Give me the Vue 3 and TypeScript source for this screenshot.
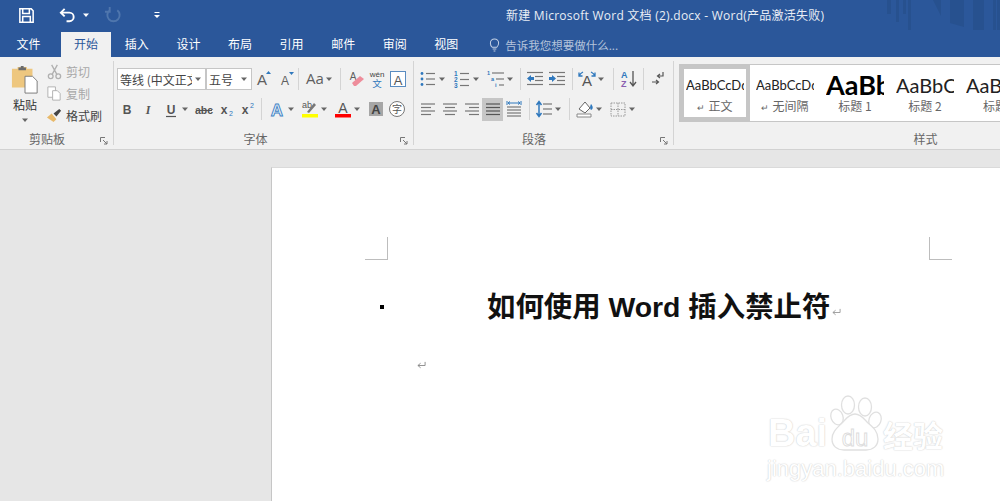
<template>
  <div class="app">
    <header class="titlebar">
      <div class="qat">
        <svg class="qat-icon save" viewBox="0 0 20 20"><path d="M3 3h12l2 2v12H3z M6 3v5h7V3 M6 17v-6h8v6" fill="none" stroke="#fff" stroke-width="1.6" /></svg>
        <svg class="qat-icon undo" viewBox="0 0 20 20"><path d="M7 3L3 7l4 4 M3 7h9a4.500 4.500 0 0 1 0 9H9" fill="none" stroke="#fff" stroke-width="2" /></svg>
        <svg class="qat-caret undo-caret" viewBox="0 0 8 8"><path d="M1 2.500h6L4 6z" fill="#fff" /></svg>
        <svg class="qat-icon redo" viewBox="0 0 20 20"><path d="M6 4.500a6.500 6.500 0 1 0 8 0 M6 1v5H1" fill="none" stroke="#4f76ad" stroke-width="2" /></svg>
        <svg class="qat-caret custom" viewBox="0 0 8 8"><path d="M1.500 1h5v1h-5z M1 4h6L4 7z" fill="#fff" /></svg>
      </div>
      <div class="doc-title">新建 Microsoft Word 文档 (2).docx - Word(产品激活失败)</div>
      <svg class="title-art" viewBox="0 0 115 36">
        <path d="M2 0h4v14H2z M11 0h3v22h-3z M18 0h3v14h-3z M23 0h3v32h-3z M48 0l8 16V0z M65 0h14v27l-14-4z M88 0h11v36H88z M108 0h3v34h-3z M112 0h3v35h-3z" fill="#27518f" />
      </svg>
    </header>

    <nav class="tabs">
      <span v-for="tab in tabs" :key="tab.name" class="tab" :class="{ active: tab.name === '开始', file: tab.name === '文件' }">{{ tab.name }}</span>
      <span class="tell-me">
        <svg class="bulb" viewBox="0 0 12 16"><path d="M3.500 11C2 9.500 1.500 8.500 1.500 6.500a4.500 4.500 0 0 1 9 0c0 2-.5 3-2 4.500z M4 13h4 M5 15h2" fill="none" stroke="#c5d2e6" stroke-width="1.100" /></svg>
        告诉我您想要做什么...
      </span>
    </nav>

    <section class="ribbon">
      <div class="group clipboard">
        <div class="clip-body">
          <div class="paste">
            <svg class="paste-icon" viewBox="0 0 30 30">
              <path d="M1 3h6V1h10v2h6v20H1z" fill="#eec77f" />
              <path d="M8 1.500h8v3H8z M10.500 0h3v2h-3z" fill="#6b6b6b" />
              <path d="M15 11h8l5 5v13H15z" fill="#fff" stroke="#777" />
            </svg>
            <span class="paste-label">粘贴</span>
            <svg class="small-caret" viewBox="0 0 8 8"><path d="M1 2.500h6L4 6z" fill="#666" /></svg>
          </div>
          <ul class="clip-list">
            <li v-for="item in clipItems" :key="item.text" :class="{ enabled: item.enabled }">
              <svg class="clip-icon" viewBox="0 0 18 18" v-html="item.icon"></svg>
              <span>{{ item.text }}</span>
            </li>
          </ul>
        </div>
        <div class="group-label">剪贴板</div>
        <svg class="launcher" viewBox="0 0 8 8"><path d="M.5 5V.5H5 M3 3l4 4 M7 4v3H4" fill="none" stroke="#777" /></svg>
      </div>

      <div v-for="group in toolGroups" :key="group.label" class="group" :class="group.cls">
        <div v-for="(row, r) in group.rows" :key="r" class="tool-row">
          <template v-for="(item, i) in row" :key="i">
            <span v-if="item.sep" class="sep" :style="{ width: item.sep + 'px' }"></span>
            <span v-else-if="item.select" class="select" :style="{ width: item.w + 'px' }">
              <span class="select-text">{{ item.select }}</span>
              <svg class="small-caret" viewBox="0 0 8 8"><path d="M1 2.500h6L4 6z" fill="#666" /></svg>
            </span>
            <span v-else class="tool" :class="{ active: item.active }" :style="{ width: item.w + 'px' }">
              <svg class="tool-icon" viewBox="0 0 20 20" v-html="icons[item.icon!]"></svg>
            </span>
            <svg v-if="item.caret" class="tool-caret" viewBox="0 0 9 8"><path d="M1 2.500h6L4 6z" fill="#666" /></svg>
          </template>
        </div>
        <div class="group-label">{{ group.label }}</div>
        <svg class="launcher" viewBox="0 0 8 8"><path d="M.5 5V.5H5 M3 3l4 4 M7 4v3H4" fill="none" stroke="#777" /></svg>
      </div>

      <div class="group styles">
        <div class="gallery">
          <div v-for="style in styleItems" :key="style.label" class="style-item" :class="{ current: style.label === '正文' }">
            <div class="style-preview" :class="style.cls">{{ style.preview }}</div>
            <div class="style-label"><i v-if="style.mark">↵</i>{{ style.label }}</div>
          </div>
        </div>
        <div class="group-label">样式</div>
      </div>
    </section>

    <main class="workspace">
      <div class="page">
        <div class="crop-row">
          <span class="crop crop-left"></span>
          <span class="crop crop-right"></span>
        </div>
        <div class="heading-row">
          <span class="bullet"></span>
          <h1>如何使用 Word 插入禁止符<svg class="return big" viewBox="0 0 12 10"><path d="M10 1v4H2 M5 2.500L2 5l3 2.500" fill="none" stroke="#999" /></svg></h1>
        </div>
        <div class="empty-para">
          <svg class="return" viewBox="0 0 12 10"><path d="M10 1v4H2 M5 2.500L2 5l3 2.500" fill="none" stroke="#888" /></svg>
        </div>
      </div>
      <div class="watermark">
        <span class="wm-bai">Bai</span>
        <svg class="wm-paw" viewBox="0 0 56 66">
          <g fill="#fff" stroke="#e0e0e0" stroke-width="1.300">
            <ellipse cx="21" cy="18" rx="6.500" ry="9" />
            <ellipse cx="38" cy="20" rx="6.500" ry="9" />
            <ellipse cx="10" cy="30" rx="6" ry="8" transform="rotate(-20 10 30)" />
            <ellipse cx="48" cy="33" rx="6" ry="8" transform="rotate(20 48 33)" />
            <path d="M28 27c6 0 9 5 13 9 6 5 10 9 10 16 0 7-5 11-12 11H17c-7 0-12-4-12-11 0-7 5-11 10-16 4-4 7-9 13-9z" />
          </g>
          <text x="28" y="59" text-anchor="middle" font-size="24" fill="#fff" stroke="#dcdcdc" stroke-width=".9" font-family="Liberation Sans">du</text>
        </svg>
        <span class="wm-cn">经验</span>
        <span class="wm-url">jingyan.baidu.com</span>
      </div>
    </main>
  </div>
</template>

<script setup lang="ts">
type Item = { w?: number; icon?: string; caret?: boolean; sep?: number; select?: string; active?: boolean };

const tabs = ["文件", "开始", "插入", "设计", "布局", "引用", "邮件", "审阅", "视图"].map((name) => ({ name }));

const grey = "#5f5f5f";
const blue = "#2f78bd";

function letter(t: string, size = 14, fill = grey, weight = "400", family = "Liberation Sans") {
  return `<text x="10" y="15" text-anchor="middle" font-size="${size}" font-weight="${weight}" fill="${fill}" font-family="${family}">${t}</text>`;
}
function lines(rows: [number, number, number][], color = "#777") {
  return rows.map(([x1, x2, y]) => `<path d="M${x1} ${y}H${x2}" stroke="${color}" stroke-width="1.200" />`).join("");
}

const icons: Record<string, string> = {
  grow: `<text x="8" y="16" text-anchor="middle" font-size="15" fill="${grey}" font-family="Liberation Sans">A</text><path d="M12 5l2.500-3 2.500 3z" fill="${blue}"/>`,
  shrink: `<text x="9" y="16" text-anchor="middle" font-size="12" fill="${grey}" font-family="Liberation Sans">A</text><path d="M13 3h5l-2.500 3z" fill="${blue}"/>`,
  case: letter("Aa", 15, grey, "400", "Open Sans"),
  eraser: `<text x="6" y="11" text-anchor="middle" font-size="10" fill="${grey}" font-family="Liberation Sans">A</text><path d="M5 14l8-7 4 3-8 7H7z" fill="#ee8d9b"/>`,
  wen: `<text x="10" y="8" text-anchor="middle" font-size="8" fill="#444" font-family="Liberation Sans">wén</text><text x="10" y="18" text-anchor="middle" font-size="9.500" fill="${blue}" font-family="Noto Sans CJK SC">文</text>`,
  box: `<rect x="2.500" y="2.500" width="15" height="15" fill="#fff" stroke="#5a8cc0"/><text x="10" y="15.500" text-anchor="middle" font-size="13" fill="#555" font-family="Liberation Sans">A</text>`,
  bold: letter("B", 12, "#555", "700"),
  italic: letter("I", 12, "#555", "700", "Liberation Serif").replace('font-weight="700"', 'font-weight="700" font-style="italic"'),
  under: letter("U", 12, "#555", "700") + `<path d="M5 17.500h10" stroke="#555" stroke-width="1.200"/>`,
  strike: letter("abc", 10.5, "#555", "700") + `<path d="M2 11.500h16" stroke="#555"/>`,
  sub: `<text x="8" y="15" text-anchor="middle" font-size="12" font-weight="700" fill="#555" font-family="Liberation Sans">x</text><text x="15" y="17" text-anchor="middle" font-size="7" fill="${blue}" font-family="Liberation Sans">2</text>`,
  sup: `<text x="8" y="15" text-anchor="middle" font-size="12" font-weight="700" fill="#555" font-family="Liberation Sans">x</text><text x="15" y="9" text-anchor="middle" font-size="7" fill="${blue}" font-family="Liberation Sans">2</text>`,
  effect: `<text x="10" y="16.500" text-anchor="middle" font-size="17" font-weight="700" fill="#eaf2fa" stroke="#3e82c4" stroke-width=".9" font-family="Liberation Sans">A</text>`,
  high: `<text x="7" y="9" text-anchor="middle" font-size="9" fill="#555" font-family="Liberation Sans">ab</text><path d="M7 13l7-9 2 2-7 8z" fill="#777"/><path d="M2 15h16v3.500H2z" fill="#ffff00"/>`,
  color: `<text x="10" y="14" text-anchor="middle" font-size="14" fill="#555" font-family="Liberation Sans">A</text><path d="M2 15h16v3.500H2z" fill="#f00"/>`,
  shade: `<rect x="3" y="3" width="14" height="14" fill="#a6a6a6"/><text x="10" y="15" text-anchor="middle" font-size="13" font-weight="700" fill="#444" font-family="Liberation Sans">A</text>`,
  circle: `<circle cx="10" cy="10" r="7.500" fill="#fff" stroke="#777"/><text x="10" y="13.500" text-anchor="middle" font-size="10" fill="#555" font-family="Noto Sans CJK SC">字</text>`,
  bullets: `<g fill="${blue}"><circle cx="4" cy="4.500" r="1.400"/><circle cx="4" cy="10" r="1.400"/><circle cx="4" cy="15.500" r="1.400"/></g>` + lines([[8, 17, 4.5], [8, 17, 10], [8, 17, 15.5]]),
  numbers: `<g fill="${blue}" font-size="6.500" font-weight="700" font-family="Liberation Sans"><text x="2" y="6.500">1</text><text x="2" y="12.500">2</text><text x="2" y="18.500">3</text></g>` + lines([[8, 17, 4.5], [8, 17, 10.5], [8, 17, 16.5]]),
  multi: `<g fill="${blue}" font-size="5.500" font-weight="700" font-family="Liberation Sans"><text x="1" y="6">1</text><text x="5" y="12">a</text><text x="9" y="18">i</text></g>` + lines([[6, 18, 4], [10, 18, 10], [13, 18, 16]]),
  outdent: lines([[2, 18, 3.5], [10, 18, 7.5], [10, 18, 11.5], [2, 18, 15.5]]) + `<path d="M2 9.500l4-3.500v2h3v3H6v2z" fill="${blue}"/>`,
  indent: lines([[2, 18, 3.5], [10, 18, 7.5], [10, 18, 11.5], [2, 18, 15.5]]) + `<path d="M9 9.500L5 6v2H2v3h3v2z" fill="${blue}"/>`,
  dir: `<text x="10" y="17" text-anchor="middle" font-size="15" fill="#555" font-family="Liberation Sans">A</text><path d="M2 7c1-2 2-3 4-4 M2 3.500V7h3.500 M18 7c-1-2-2-3-4-4 M18 3.500V7h-3.500" fill="none" stroke="${blue}" stroke-width="1.300"/>`,
  sort: `<text x="2" y="9" font-size="9" font-weight="700" fill="${blue}" font-family="Liberation Sans">A</text><text x="2" y="18" font-size="9" font-weight="700" fill="#8a5fb0" font-family="Liberation Sans">Z</text><path d="M14 2v14 M11 13l3 4 3-4" fill="none" stroke="#555" stroke-width="1.300"/>`,
  marks: `<path d="M14 3v4H9 M11 5L8.500 7l2.500 2 M3 13h6 M7 11l2.500 2L7 15" fill="none" stroke="#555" stroke-width="1.200"/>`,
  left: lines([[3, 17, 5], [3, 13, 8.5], [3, 17, 12], [3, 13, 15.5]]),
  center: lines([[3, 17, 5], [5, 15, 8.5], [3, 17, 12], [5, 15, 15.5]]),
  right: lines([[3, 17, 5], [7, 17, 8.5], [3, 17, 12], [7, 17, 15.5]]),
  justify: lines([[3, 17, 5], [3, 17, 8.5], [3, 17, 12], [3, 17, 15.5]], "#555"),
  dist: lines([[3, 17, 8], [3, 17, 11], [3, 17, 14], [3, 17, 17]]) + `<path d="M3 2v4 M17 2v4 M4 4h12 M6 2.500L4 4l2 1.500 M14 2.500L16 4l-2 1.500" fill="none" stroke="${blue}"/>`,
  spacing: lines([[9, 18, 5], [9, 18, 10], [9, 18, 15]]) + `<path d="M5 3v14 M2.500 6L5 2.500 7.500 6 M2.500 14L5 17.500 7.500 14" fill="none" stroke="${blue}" stroke-width="1.500"/>`,
  fill: `<path d="M4 10l6-7 5 6-5 5z" fill="#fff" stroke="#666"/><path d="M16 5c2 2 2.500 5 0 6-1-1-1.500-3 0-6z" fill="${blue}"/><path d="M2 15h14v3H2z" fill="#fff" stroke="#888"/>`,
  border: `<path d="M3 4h14v13H3z M10 4v13 M3 10.500h14" fill="none" stroke="#999" stroke-dasharray="1.500 1"/>`,
};

const clipItems = [
  { text: "剪切", enabled: false, icon: `<g fill="none" stroke="#b0b0b0" stroke-width="1.400"><circle cx="5" cy="14" r="2.500"/><circle cx="13" cy="14" r="2.500"/><path d="M6.500 12L12 2 M11.500 12L6 2"/></g>` },
  { text: "复制", enabled: false, icon: `<g fill="#fff" stroke="#b0b0b0"><path d="M2 2h8v11H2z"/><path d="M7 6h5l3 3v7H7z"/></g>` },
  { text: "格式刷", enabled: true, icon: `<path d="M1 11l5-4 5 6-3 3z" fill="#e8b96a"/><path d="M8 7l6-5 2 2-5 6z" fill="#444"/>` },
];

const toolGroups: { label: string; cls: string; rows: Item[][] }[] = [
  {
    label: "字体",
    cls: "font",
    rows: [
      [
        { select: "等线 (中文正文)", w: 89 },
        { select: "五号", w: 46 },
        { w: 22, icon: "grow" },
        { w: 22, icon: "shrink" },
        { sep: 4 },
        { w: 25, icon: "case", caret: true },
        { sep: 11 },
        { w: 22, icon: "eraser" },
        { w: 20, icon: "wen" },
        { w: 21, icon: "box" },
      ],
      [
        { w: 20, icon: "bold" },
        { w: 21, icon: "italic" },
        { w: 23, icon: "under", caret: true },
        { w: 24, icon: "strike" },
        { w: 22, icon: "sub" },
        { w: 21, icon: "sup" },
        { sep: 8 },
        { w: 22, icon: "effect", caret: true },
        { w: 24, icon: "high", caret: true },
        { w: 24, icon: "color", caret: true },
        { w: 24, icon: "shade" },
        { w: 21, icon: "circle" },
      ],
    ],
  },
  {
    label: "段落",
    cls: "para",
    rows: [
      [
        { w: 24, icon: "bullets", caret: true },
        { w: 25, icon: "numbers", caret: true },
        { w: 25, icon: "multi", caret: true },
        { sep: 10 },
        { w: 20, icon: "outdent" },
        { w: 22, icon: "indent" },
        { sep: 10 },
        { w: 20, icon: "dir", caret: true },
        { sep: 13 },
        { w: 20, icon: "sort" },
        { sep: 8 },
        { w: 22, icon: "marks" },
      ],
      [
        { w: 24, icon: "left" },
        { w: 22, icon: "center" },
        { w: 22, icon: "right" },
        { w: 21, icon: "justify", active: true },
        { w: 21, icon: "dist" },
        { sep: 10 },
        { w: 20, icon: "spacing", caret: true },
        { sep: 12 },
        { w: 20, icon: "fill", caret: true },
        { w: 24, icon: "border", caret: true },
      ],
    ],
  },
];

const styleItems = [
  { preview: "AaBbCcDd", label: "正文", mark: true, cls: "s-normal" },
  { preview: "AaBbCcDd", label: "无间隔", mark: true, cls: "s-normal" },
  { preview: "AaBbCc", label: "标题 1", mark: false, cls: "s-h1" },
  { preview: "AaBbCc", label: "标题 2", mark: false, cls: "s-h2" },
  { preview: "AaBbCc", label: "标题", mark: false, cls: "s-h2" },
];
</script>

<style>
html,
body {
  margin: 0;
  overflow: hidden;
  background: #e6e6e6;
}
</style>

<style scoped>
.app {
  width: 1000px;
  height: 501px;
  display: flex;
  flex-direction: column;
  overflow: hidden;
  font-family: "Noto Sans CJK SC", sans-serif;
  font-size: 12px;
  color: #444;
}
.titlebar {
  height: 30px;
  flex: none;
  background: #2b579a;
  display: flex;
  align-items: center;
  position: relative;
}
.qat {
  display: flex;
  align-items: center;
  width: 506px;
  flex: none;
}
.qat-icon {
  width: 19px;
  height: 19px;
  flex: none;
}
.qat-caret {
  width: 8px;
  height: 8px;
  flex: none;
}
.save {
  margin-left: 17px;
}
.undo {
  margin-left: 22px;
}
.undo-caret {
  margin-left: 5px;
}
.redo {
  margin-left: 14px;
}
.custom {
  margin-left: 30px;
}
.doc-title {
  color: #e8edf5;
  font-family: "Open Sans", "Noto Sans CJK SC", sans-serif;
  font-size: 12px;
  letter-spacing: 0.25px;
  white-space: nowrap;
}
.title-art {
  position: absolute;
  right: 0;
  top: 0;
  width: 115px;
  height: 36px;
}
.tabs {
  height: 27px;
  flex: none;
  background: #2b579a;
  display: flex;
  align-items: flex-end;
  color: #fff;
  position: relative;
}
.tab {
  width: 51.6px;
  height: 25px;
  line-height: 24px;
  text-align: center;
  flex: none;
}
.tab.file {
  width: 57px;
  margin-right: 4px;
}
.tab.active {
  width: 50px;
  background: #f1f1f1;
  color: #2b579a;
}
.tell-me {
  display: flex;
  align-items: center;
  gap: 5px;
  height: 25px;
  margin-left: 17px;
  color: #b4c3da;
  font-size: 11.5px;
}
.bulb {
  width: 11px;
  height: 15px;
}
.ribbon {
  height: 93px;
  flex: none;
  box-sizing: border-box;
  background: #f1f1f1;
  border-bottom: 1px solid #d2d2d2;
  display: flex;
  overflow: hidden;
}
.group {
  position: relative;
  flex: none;
  box-sizing: border-box;
  height: 84px;
  margin-top: 4px;
  padding-top: 3px;
  border-right: 1px solid #d4d4d4;
  display: flex;
  flex-direction: column;
}
.clipboard {
  width: 114px;
  padding-top: 0;
}
.font {
  width: 300px;
  padding-left: 3px;
}
.para {
  width: 260px;
  padding-left: 0;
}
.styles {
  width: 504px;
  padding-left: 5px;
  border-right: 0;
}
.group-label {
  margin-top: auto;
  margin-bottom: -2px;
  padding-right: 19px;
  text-align: center;
  line-height: 16px;
  font-size: 12px;
  color: #666;
}
.styles .group-label {
  padding-right: 6px;
}
.launcher {
  position: absolute;
  right: 5px;
  bottom: 0;
  width: 8px;
  height: 8px;
}
.clip-body {
  display: flex;
}
.paste {
  width: 46px;
  flex: none;
  display: flex;
  flex-direction: column;
  align-items: center;
  padding: 5px 0 0 4px;
  box-sizing: border-box;
}
.paste-icon {
  width: 28px;
  height: 28px;
}
.paste-label {
  line-height: 16px;
  margin-top: 3px;
  color: #333;
}
.small-caret {
  width: 8px;
  height: 8px;
  flex: none;
  margin-top: 3px;
}
.clip-list {
  list-style: none;
  margin: -1px 0 0;
  padding: 0;
}
.clip-list li {
  height: 22px;
  display: flex;
  align-items: center;
  gap: 3px;
  color: #a8a8a8;
  white-space: nowrap;
}
.clip-list li.enabled {
  color: #444;
}
.clip-icon {
  width: 17px;
  height: 17px;
}
.tool-row {
  height: 30px;
  display: flex;
  align-items: center;
  flex: none;
}
.select {
  height: 22px;
  box-sizing: border-box;
  border: 1px solid #c6c6c6;
  background: #fff;
  display: flex;
  align-items: center;
  padding: 0 3px 0 2px;
  flex: none;
}
.select .small-caret {
  margin-top: 0;
}
.select-text {
  flex: 1;
  min-width: 0;
  margin-right: 2px;
  overflow: hidden;
  white-space: nowrap;
  color: #444;
}
.tool {
  height: 23px;
  display: flex;
  align-items: center;
  justify-content: flex-end;
  flex: none;
}
.tool.active {
  background: #c6c6c6;
}
.tool-icon {
  width: 20px;
  height: 20px;
  flex: none;
}
.tool-caret {
  width: 9px;
  height: 8px;
  flex: none;
}
.sep {
  height: 22px;
  flex: none;
  position: relative;
}
.sep::after {
  content: "";
  position: absolute;
  left: 50%;
  top: 0;
  bottom: 0;
  width: 1px;
  background: #d4d4d4;
}
.gallery {
  display: flex;
  height: 58px;
  box-sizing: border-box;
  background: #fff;
  border: 1px solid #c6c6c6;
  flex: none;
}
.style-item {
  width: 70px;
  flex: none;
  box-sizing: border-box;
  border: 4px solid transparent;
  overflow: hidden;
  text-align: center;
}
.style-item.current {
  border-color: #c6c6c6;
}
.style-preview {
  width: 58px;
  height: 28px;
  margin-left: 2px;
  line-height: 32px;
  overflow: hidden;
  white-space: nowrap;
  text-align: left;
  font-family: Lato, sans-serif;
  color: #222;
}
.s-normal {
  font-size: 13px;
}
.s-h1 {
  font-size: 27px;
  font-weight: 700;
  color: #000;
}
.s-h2 {
  font-size: 20px;
}
.style-label {
  line-height: 18px;
  color: #666;
  white-space: nowrap;
}
.style-label i {
  font-style: normal;
  font-size: 9px;
  margin-right: 3px;
}
.workspace {
  flex: 1;
  position: relative;
  padding: 17px 0 0 271px;
  background: #e6e6e6;
  overflow: hidden;
}
.page {
  height: 100%;
  background: #fff;
  border-left: 1px solid #c6c6c6;
  border-top: 1px solid #dadada;
  box-sizing: border-box;
  padding: 69px 48px 0 93px;
}
.crop-row {
  display: flex;
  justify-content: space-between;
}
.crop {
  width: 23px;
  height: 23px;
  box-sizing: border-box;
  border-bottom: 1px solid #bdbdbd;
}
.crop-left {
  border-right: 1px solid #bdbdbd;
}
.crop-right {
  border-left: 1px solid #bdbdbd;
}
.heading-row {
  display: flex;
  align-items: center;
  margin-top: 27px;
  height: 40px;
}
.bullet {
  width: 4px;
  height: 4px;
  background: #000;
  margin: 0 0 1px 15px;
  flex: none;
}
h1 {
  margin: 0 0 0 103px;
  font-family: "Liberation Sans", "Noto Sans CJK SC", sans-serif;
  font-size: 28.4px;
  font-weight: 700;
  line-height: 40px;
  color: #111;
  white-space: nowrap;
  display: flex;
  align-items: center;
}
.return {
  width: 11px;
  height: 9px;
  display: block;
}
.return.big {
  margin: 10px 0 0 1px;
}
.empty-para {
  margin: 34px 0 0 51px;
}
.watermark {
  position: absolute;
  left: 765px;
  top: 243px;
  width: 190px;
  height: 90px;
  color: #fff;
  pointer-events: none;
}
.watermark span {
  position: absolute;
  white-space: nowrap;
  text-shadow: 0 0 1px #ccc, 0 0 2px #ddd;
}
.wm-bai {
  left: 3px;
  top: 18px;
  font: 700 38px/44px "Liberation Sans", sans-serif;
}
.wm-cn {
  left: 118px;
  top: 22px;
  font: 700 30px/38px "Noto Sans CJK SC", sans-serif;
}
.wm-url {
  left: 2px;
  top: 62px;
  font: 400 22px/28px "Liberation Sans", sans-serif;
}
.wm-paw {
  position: absolute;
  left: 62px;
  top: -6px;
  width: 56px;
  height: 66px;
}
</style>
